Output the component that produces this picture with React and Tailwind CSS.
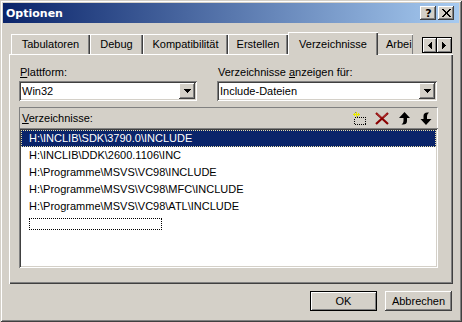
const raised = "shadow-[inset_-1px_-1px_0_#404040,inset_1px_1px_0_#ffffff,inset_-2px_-2px_0_#808080]";
const sunken = "shadow-[inset_1px_1px_0_#808080,inset_-1px_-1px_0_#ffffff,inset_2px_2px_0_#404040,inset_-2px_-2px_0_#d4d0c8]";
const tabShadow = "shadow-[inset_1px_1px_0_#ffffff,inset_-1px_0_0_#404040,inset_-2px_0_0_#808080]";

function Tab({ label, w, selected }) {
  if (selected) {
    return (
      <div className={`relative z-10 -mb-px h-[23px] ${w} bg-[#d4d0c8] ${tabShadow} flex justify-center pt-[6px]`}>
        <span>{label}</span>
      </div>
    );
  }
  return (
    <div className={`h-[20px] ${w} ${tabShadow} flex justify-center pt-[4px]`}>
      <span>{label}</span>
    </div>
  );
}

function ComboArrow() {
  return (
    <div className={`w-[16px] h-[16px] mr-[2px] bg-[#d4d0c8] ${raised} flex items-center justify-center`}>
      <svg width="7" height="4" viewBox="0 0 7 4" shapeRendering="crispEdges">
        <path d="M0 0h7v1H0zM1 1h5v1H1zM2 2h3v1H2zM3 3h1v1H3z" fill="#000" />
      </svg>
    </div>
  );
}

function Combo({ w, text }) {
  return (
    <div className={`${w} h-[20px] bg-white ${sunken} flex items-center`}>
      <span className="pl-[3px] flex-1">{text}</span>
      <ComboArrow />
    </div>
  );
}

const rows = [
  "H:\\INCLIB\\SDK\\3790.0\\INCLUDE",
  "H:\\INCLIB\\DDK\\2600.1106\\INC",
  "H:\\Programme\\MSVS\\VC98\\INCLUDE",
  "H:\\Programme\\MSVS\\VC98\\MFC\\INCLUDE",
  "H:\\Programme\\MSVS\\VC98\\ATL\\INCLUDE",
];

export default function App() {
  return (
    <div className="w-[462px] h-[322px] bg-[#d4d0c8] p-[3px] flex flex-col shadow-[inset_1px_1px_0_#d4d0c8,inset_-1px_-1px_0_#404040,inset_2px_2px_0_#ffffff,inset_-2px_-2px_0_#808080] font-['Liberation_Sans',Arial,sans-serif] text-[11px] leading-[13px] text-black select-none">
      {/* Title bar */}
      <div className="h-[20px] shrink-0 flex items-center pl-[3px] pr-[5px] bg-[linear-gradient(to_right,#0a246a,#a6caf0)]">
        <span className="font-['DejaVu_Sans',sans-serif] font-bold text-white text-[11px] leading-[13px]">Optionen</span>
        <div className="ml-auto flex gap-[2px]">
          <div className={`w-[16px] h-[14px] bg-[#d4d0c8] ${raised} flex items-center justify-center`}>
            <span className="font-['DejaVu_Sans',sans-serif] font-bold text-[11px] leading-[11px] pl-[1px]">?</span>
          </div>
          <div className={`w-[16px] h-[14px] bg-[#d4d0c8] ${raised} flex items-center justify-center`}>
            <svg width="9" height="8" viewBox="0 0 9 8" shapeRendering="crispEdges">
              <path d="M0 0h2v1H0zM7 0h2v1H7zM1 1h2v1H1zM6 1h2v1H6zM2 2h2v1H2zM5 2h2v1H5zM3 3h3v1H3zM3 4h3v1H3zM2 5h2v1H2zM5 5h2v1H5zM1 6h2v1H1zM6 6h2v1H6zM0 7h2v1H0zM7 7h2v1H7z" fill="#000" />
            </svg>
          </div>
        </div>
      </div>

      {/* Tab strip */}
      <div className="mt-[9px] mx-[6px] h-[22px] shrink-0 flex items-end">
        <div className="flex items-end pl-[2px]">
          <Tab label="Tabulatoren" w="w-[79px]" />
          <Tab label="Debug" w="w-[53px]" />
          <Tab label="Kompatibilität" w="w-[85px]" />
          <Tab label="Erstellen" w="w-[60px]" />
          <Tab label="Verzeichnisse" w="w-[90px]" selected />
          <div className="h-[20px] w-[35px] overflow-hidden shadow-[inset_0_1px_0_#ffffff,inset_-1px_0_0_#808080] pt-[4px] pl-[8px] whitespace-nowrap">
            Arbei
          </div>
        </div>
        <div className="ml-auto mr-[1px] mb-[1px] flex">
          <div className="w-[15px] h-[16px] bg-[#d4d0c8] border border-black shadow-[inset_1px_1px_0_#ffffff,inset_-1px_-1px_0_#808080] flex items-center justify-center">
            <svg width="4" height="7" viewBox="0 0 4 7" shapeRendering="crispEdges">
              <path d="M3 0h1v7H3zM2 1h1v5H2zM1 2h1v3H1zM0 3h1v1H0z" fill="#000" />
            </svg>
          </div>
          <div className="w-[15px] h-[16px] bg-[#d4d0c8] border border-l-0 border-black shadow-[inset_1px_1px_0_#ffffff,inset_-1px_-1px_0_#808080] flex items-center justify-center">
            <svg width="4" height="7" viewBox="0 0 4 7" shapeRendering="crispEdges">
              <path d="M0 0h1v7H0zM1 1h1v5H1zM2 2h1v3H2zM3 3h1v1H3z" fill="#000" />
            </svg>
          </div>
        </div>
      </div>

      {/* Panel */}
      <div className="mx-[6px] h-[230px] shrink-0 shadow-[inset_1px_1px_0_#ffffff,inset_-1px_-1px_0_#404040,inset_-2px_-2px_0_#808080] pt-[12px] pl-[10px] flex flex-col">
        <div className="flex">
          <div className="w-[178px] flex flex-col">
            <span className="pl-[1px]"><u>P</u>lattform:</span>
            <div className="mt-[2px]"><Combo w="w-[178px]" text="Win32" /></div>
          </div>
          <div className="ml-[20px] w-[220px] flex flex-col">
            <span className="pl-[1px]">Verzeichnisse <u>a</u>nzeigen für:</span>
            <div className="mt-[2px]"><Combo w="w-[220px]" text="Include-Dateien" /></div>
          </div>
        </div>

        {/* Header */}
        <div className="mt-[6px] w-[419px] h-[21px] border-t border-l border-r border-t-[#808080] border-l-[#808080] border-r-white flex items-center pl-[2px] pr-[3px]">
          <span><u>V</u>erzeichnisse:</span>
          <div className="ml-auto flex gap-[6px] items-center">
            <svg width="16" height="13" viewBox="0 0 16 13" shapeRendering="crispEdges">
              <rect x="2.5" y="5.5" width="11" height="7" fill="none" stroke="#000" strokeWidth="1" strokeDasharray="1 1" />
              <path d="M4 0h1v5H4zM1 2h7v1H1zM2 1h1v1H2zM6 1h1v1H6zM2 3h1v1H2zM6 3h1v1H6z" fill="#e8e800" />
              <path d="M3 0h1v1H3zM5 4h1v1H5z" fill="#808080" />
            </svg>
            <svg width="16" height="13" viewBox="0 0 16 13">
              <path d="M2 1L14 12M14 1L2 12" stroke="#8b0000" strokeWidth="2.2" />
              <path d="M3 1.5L7 5.5M13 1.5L9 5.5" stroke="#e08080" strokeWidth="0.6" />
            </svg>
            <svg width="16" height="13" viewBox="0 0 16 13">
              <path d="M8.5 0L14 6L11 6L11 9Q11 12.5 7 12.5L5.5 12.5Q7.5 11 7.5 9L7.5 6L3 6Z" fill="#000" />
            </svg>
            <svg width="16" height="13" viewBox="0 0 16 13">
              <path d="M8 13L2.5 7L5.5 7L5.5 4Q5.5 0.5 9.5 0.5L11 0.5Q9 2 9 4L9 7L13.5 7Z" fill="#000" />
            </svg>
          </div>
        </div>

        {/* List */}
        <div className={`w-[419px] h-[140px] bg-white ${sunken} p-[2px] flex flex-col`}>
          {rows.map((r, i) =>
            i === 0 ? (
              <div key={i} className="h-[17px] shrink-0 bg-[#0a246a] text-white border border-dotted border-[#e8dfa8] flex items-center pl-[7px]">
                {r}
              </div>
            ) : (
              <div key={i} className="h-[17px] shrink-0 flex items-center pl-[8px] whitespace-nowrap">
                {r}
              </div>
            )
          )}
          <div className="h-[17px] shrink-0 flex items-center pl-[8px]">
            <div className="w-[133px] h-[12px] border border-dotted border-black" />
          </div>
        </div>
      </div>

      {/* Buttons */}
      <div className="mt-[7px] mx-[6px] pr-[1px] flex justify-end gap-[8px]">
        <div className="w-[67px] h-[20px] bg-[#d4d0c8] shadow-[inset_0_0_0_1px_#000000,inset_1px_1px_0_1px_#ffffff,inset_-1px_-1px_0_1px_#808080] flex items-center justify-center pt-[1px]">
          OK
        </div>
        <div className={`w-[67px] h-[20px] bg-[#d4d0c8] ${raised} flex items-center justify-center pt-[1px]`}>
          Abbrechen
        </div>
      </div>
    </div>
  );
}
